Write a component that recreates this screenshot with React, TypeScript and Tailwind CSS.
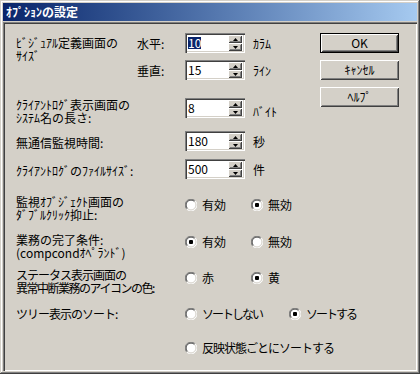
import React from 'react';

const raised = 'shadow-[inset_1px_1px_#ffffff,inset_-1px_-1px_#404040,inset_2px_2px_#d4d0c8,inset_-2px_-2px_#808080]';
const sunken = 'shadow-[inset_1px_1px_#808080,inset_2px_2px_#404040,inset_-1px_-1px_#ffffff,inset_-2px_-2px_#d4d0c8]';

const Arrow: React.FC<{ down?: boolean }> = ({ down }) => (
    <svg width="5" height="3" viewBox="0 0 5 3">
        {down ? <polygon points="0,0 5,0 2.5,3" fill="#000" /> : <polygon points="0,3 5,3 2.5,0" fill="#000" />}
    </svg>
);

const Spin: React.FC<{ value: string; selected?: boolean }> = ({ value, selected }) => (
    <div className={`w-[60px] h-[20px] p-[2px] flex shrink-0 bg-white ${sunken}`}>
        <div className="flex-1 flex items-center pl-[1px]">
            <span className={selected ? 'bg-[#0a246a] text-white leading-[12px]' : 'leading-[12px]'}>{value}</span>
        </div>
        <div className="w-[15px] flex flex-col justify-between pr-[1px]">
            <div className={`h-[8px] bg-[#d4d0c8] flex items-center justify-center ${raised}`}>
                <Arrow />
            </div>
            <div className={`h-[8px] bg-[#d4d0c8] flex items-center justify-center ${raised}`}>
                <Arrow down />
            </div>
        </div>
    </div>
);

const Radio: React.FC<{ checked?: boolean; label: string; w: string; tight?: string }> = ({ checked, label, w, tight }) => (
    <div className={`flex items-center shrink-0 ${w}`}>
        <svg width="12" height="12" viewBox="0 0 12 12" className="shrink-0">
            <circle cx="6" cy="6" r="5.5" fill="#ffffff" />
            <path d="M10.2 1.8 A5.5 5.5 0 0 0 1.8 10.2" fill="none" stroke="#808080" strokeWidth="1" />
            <path d="M1.8 10.2 A5.5 5.5 0 0 0 10.2 1.8" fill="none" stroke="#ffffff" strokeWidth="1" />
            <path d="M9.5 2.5 A4.5 4.5 0 0 0 2.5 9.5" fill="none" stroke="#404040" strokeWidth="1" />
            <path d="M2.5 9.5 A4.5 4.5 0 0 0 9.5 2.5" fill="none" stroke="#d4d0c8" strokeWidth="1" />
            {checked && <rect x="4" y="4" width="4" height="4" rx="1" fill="#000" />}
        </svg>
        <span className={`ml-[5px] leading-[13px] whitespace-nowrap ${tight ?? ''}`}>{label}</span>
    </div>
);

const Button: React.FC<{ label: string; def?: boolean }> = ({ label, def }) =>
    def ? (
        <div className="w-[79px] h-[20px] border border-black">
            <div className={`w-full h-full flex items-center justify-center ${raised}`}>{label}</div>
        </div>
    ) : (
        <div className={`w-[79px] h-[20px] flex items-center justify-center ${raised}`}>{label}</div>
    );

export default function App() {
    return (
        <div className="w-[420px] h-[374px] overflow-hidden bg-[#d4d0c8] p-[3px] flex flex-col text-[12px] text-black font-['Noto_Sans_CJK_JP',sans-serif] shadow-[inset_-1px_-1px_#404040,inset_1px_1px_#d4d0c8,inset_-2px_-2px_#808080,inset_2px_2px_#ffffff]">
            <div className="h-[18px] shrink-0 bg-gradient-to-r from-[#0a246a] to-[#a6caf0] flex items-center pl-[3px] text-white font-bold leading-none">
                ｵﾌﾟｼｮﾝの設定
            </div>
            <div className={`flex-1 mt-[1px] flex ${sunken}`}>
                <div className="w-[317px] shrink-0 flex flex-col pl-[13px] leading-[13px] whitespace-nowrap">
                    <div className="flex mt-[11px]">
                        <div className="w-[121px] shrink-0 pt-[3px]">
                            ﾋﾞｼﾞｭｱﾙ定義画面の
                            <br />
                            ｻｲｽﾞ
                        </div>
                        <div className="flex flex-col gap-[7px]">
                            <div className="flex items-center">
                                <span className="w-[48px] shrink-0">水平:</span>
                                <Spin value="10" selected />
                                <span className="ml-[8px]">ｶﾗﾑ</span>
                            </div>
                            <div className="flex items-center">
                                <span className="w-[48px] shrink-0">垂直:</span>
                                <Spin value="15" />
                                <span className="ml-[8px]">ﾗｲﾝ</span>
                            </div>
                        </div>
                    </div>
                    <div className="flex mt-[18px]">
                        <div className="w-[169px] shrink-0">
                            ｸﾗｲｱﾝﾄﾛｸﾞ表示画面の
                            <br />
                            ｼｽﾃﾑ名の長さ:
                        </div>
                        <Spin value="8" />
                        <span className="ml-[8px] self-center">ﾊﾞｲﾄ</span>
                    </div>
                    <div className="flex items-center mt-[7px]">
                        <div className="w-[169px] shrink-0 pt-[2px]">無通信監視時間:</div>
                        <Spin value="180" />
                        <span className="ml-[8px]">秒</span>
                    </div>
                    <div className="flex items-center mt-[8px]">
                        <div className="w-[169px] shrink-0 pt-[2px]">ｸﾗｲｱﾝﾄﾛｸﾞのﾌｧｲﾙｻｲｽﾞ:</div>
                        <Spin value="500" />
                        <span className="ml-[8px]">件</span>
                    </div>
                    <div className="flex mt-[16px]">
                        <div className="w-[169px] shrink-0">
                            監視ｵﾌﾞｼﾞｪｸﾄ画面の
                            <br />
                            ﾀﾞﾌﾞﾙｸﾘｯｸ抑止:
                        </div>
                        <div className="flex pt-[3px] h-fit">
                            <Radio label="有効" w="w-[66px]" />
                            <Radio label="無効" checked w="w-[66px]" />
                        </div>
                    </div>
                    <div className="flex mt-[12px]">
                        <div className="w-[169px] shrink-0">
                            業務の完了条件:
                            <br />
                            (compcondｵﾍﾟﾗﾝﾄﾞ)
                        </div>
                        <div className="flex pt-[2px] h-fit">
                            <Radio label="有効" checked w="w-[66px]" />
                            <Radio label="無効" w="w-[66px]" />
                        </div>
                    </div>
                    <div className="flex mt-[9px]">
                        <div className="w-[169px] shrink-0 tracking-[-1px]">
                            ステータス表示画面の
                            <br />
                            <span className="tracking-[-1.5px]">異常中断業務のアイコンの色:</span>
                        </div>
                        <div className="flex pt-[3px] h-fit">
                            <Radio label="赤" w="w-[66px]" />
                            <Radio label="黄" checked w="w-[66px]" />
                        </div>
                    </div>
                    <div className="flex mt-[13px]">
                        <div className="w-[169px] shrink-0 tracking-[-1px]">ツリー表示のソート:</div>
                        <div className="flex h-fit">
                            <Radio label="ソートしない" w="w-[104px]" tight="tracking-[-2px]" />
                            <Radio label="ソートする" checked w="w-[70px]" tight="tracking-[-2px]" />
                        </div>
                    </div>
                    <div className="flex mt-[21px] pl-[169px]">
                        <Radio label="反映状態ごとにソートする" w="w-[135px]" tight="tracking-[-1px]" />
                    </div>
                </div>
                <div className="flex flex-col gap-[7px] pt-[11px]">
                    <Button label="OK" def />
                    <Button label="ｷｬﾝｾﾙ" />
                    <Button label="ﾍﾙﾌﾟ" />
                </div>
            </div>
        </div>
    );
}
